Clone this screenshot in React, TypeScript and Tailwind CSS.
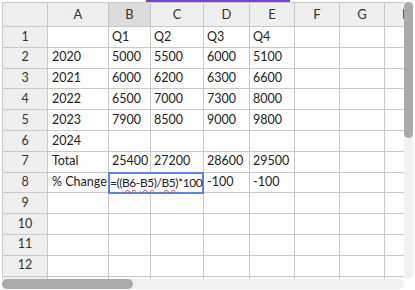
import React from 'react';

const cols = [
  { key: 'A', w: 'w-[61px]' },
  { key: 'B', w: 'w-[42px]' },
  { key: 'C', w: 'w-[53px]' },
  { key: 'D', w: 'w-[46px]' },
  { key: 'E', w: 'w-[45px]' },
  { key: 'F', w: 'w-[45px]' },
  { key: 'G', w: 'w-[45px]' },
  { key: 'H', w: 'w-[45px]' },
];

const data: string[][] = [
  ['', 'Q1', 'Q2', 'Q3', 'Q4'],
  ['2020', '5000', '5500', '6000', '5100'],
  ['2021', '6000', '6200', '6300', '6600'],
  ['2022', '6500', '7000', '7300', '8000'],
  ['2023', '7900', '8500', '9000', '9800'],
  ['2024', '', '', '', ''],
  ['Total', '25400', '27200', '28600', '29500'],
  ['% Change', '', '', '-100', '-100'],
  [], [], [], [], [],
];

const Squiggle: React.FC<{ children: React.ReactNode }> = ({ children }) => (
  <span className="underline decoration-wavy decoration-[#e53935] decoration-1 underline-offset-[2px]">{children}</span>
);

const FormulaEditor: React.FC = () => (
  <div className="absolute -left-px -top-px z-10 flex h-[22px] w-[96px] items-center border-2 border-[#5b84e6] bg-white text-[12px] tracking-[-0.45px] text-[#222] whitespace-nowrap">
    =((<Squiggle>B6</Squiggle>-<Squiggle>B5</Squiggle>)/<Squiggle>B5</Squiggle>)*100
  </div>
);

const App: React.FC = () => {
  return (
    <div className="relative w-[415px] h-[290px] overflow-hidden bg-white" style={{ fontFamily: 'Lato, "Noto Sans", sans-serif' }}>
      <div className="absolute left-[146px] top-0 h-[2px] w-[144px] bg-[#7b3fd6]" />

      <div className="flex pl-[2px] pt-[2px]">
        <div className="h-[277px] w-[402px] overflow-hidden">
          <div className="w-max border-l border-t border-[#c8c8c8]">
            {/* column header */}
            <div className="flex h-[24px] text-[13px] text-[#333]">
              <div className="w-[45px] shrink-0 border-b border-r border-[#c8c8c8] bg-[#efefef]" />
              {cols.map(c => (
                <div
                  key={c.key}
                  className={`${c.w} shrink-0 flex items-center justify-center border-b border-r border-[#c8c8c8] ${c.key === 'B' ? 'bg-[#dcdcdc]' : 'bg-[#efefef]'}`}
                >
                  {c.key}
                </div>
              ))}
            </div>

            {data.map((row, i) => (
              <div key={i} className="flex h-[20.8px] text-[12.5px] text-[#222]">
                <div className="w-[45px] shrink-0 flex items-center justify-center border-b border-r border-[#c8c8c8] bg-[#efefef] text-[#333]">
                  {i + 1}
                </div>
                {cols.map((c, j) => (
                  <div
                    key={c.key}
                    className={`${c.w} relative shrink-0 flex items-center whitespace-nowrap border-b border-r border-[#c8c8c8] ${j === 0 ? 'pl-1' : 'pl-[3px]'}`}
                  >
                    {row[j] ?? ''}
                    {i === 7 && j === 1 && <FormulaEditor />}
                  </div>
                ))}
              </div>
            ))}
          </div>
        </div>

        {/* vertical scrollbar */}
        <div className="h-[277px] w-[9px] rounded-b-[5px] bg-[#f1f1f1]">
          <div className="h-[136px] w-[9px] rounded-full bg-[#aaaaaa]" />
        </div>
      </div>

      {/* horizontal scrollbar */}
      <div className="ml-[2px] flex h-[10px] w-[402px] rounded-r-[5px] bg-[#f1f1f1]">
        <div className="h-[10px] w-[131px] rounded-full bg-[#aaaaaa]" />
      </div>
    </div>
  );
};

export default App;
